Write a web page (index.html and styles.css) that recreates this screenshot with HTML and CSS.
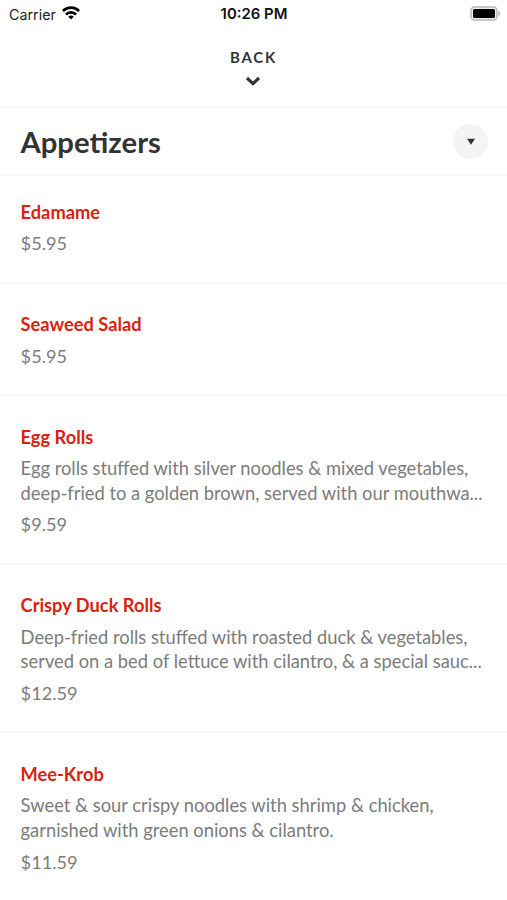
FILE: index.html
```html
<!DOCTYPE html>
<html lang="en">
<head>
<meta charset="utf-8">
<title>Appetizers</title>
<link rel="stylesheet" href="styles.css">
</head>
<body>
<div class="status">
  <div class="carrier"><span>Carrier</span>
    <svg class="wifi" width="18" height="14" viewBox="0 0 18 14"><g fill="none" stroke="#000" stroke-width="2.7"><path d="M.9 5a11.5 11.5 0 0 1 16.2 0"/><path d="M3.9 8.5a7.2 7.2 0 0 1 10.2 0"/></g><path d="M9 13.4L6.2 10.7a3.9 3.9 0 0 1 5.6 0z"/></svg>
  </div>
  <time>10:26 PM</time>
  <svg class="battery" width="31" height="15" viewBox="0 0 31 15"><rect x="1" y="1" width="26" height="13" rx="3.6" fill="#eee" stroke="#b8b8b8" stroke-width="1.5"/><rect x="3" y="3" width="22" height="9" rx="1.5"/><path d="M28.3 5c2.8 1 2.8 4 0 5z" fill="#b8b8b8"/></svg>
</div>
<button class="back"><span>BACK</span>
  <svg width="16" height="10" viewBox="0 0 16 10"><path d="M2 2l6 5.6L14 2" fill="none" stroke="#333" stroke-width="3.1"/></svg>
</button>
<header class="heading"><h1>Appetizers</h1>
  <button class="toggle"><svg width="10" height="8" viewBox="0 0 10 8"><path d="M1 .8h8L5 6.8z" fill="#333"/></svg></button>
</header>
<main>
  <article class="item"><h2>Edamame</h2><p class="price">$5.95</p></article>
  <article class="item"><h2>Seaweed Salad</h2><p class="price">$5.95</p></article>
  <article class="item"><h2>Egg Rolls</h2><p class="desc">Egg rolls stuffed with silver noodles &amp; mixed vegetables,<br>deep-fried to a golden brown, served with our mouthwa...</p><p class="price">$9.59</p></article>
  <article class="item"><h2>Crispy Duck Rolls</h2><p class="desc">Deep-fried rolls stuffed with roasted duck &amp; vegetables,<br>served on a bed of lettuce with cilantro, &amp; a special sauc...</p><p class="price">$12.59</p></article>
  <article class="item"><h2>Mee-Krob</h2><p class="desc">Sweet &amp; sour crispy noodles with shrimp &amp; chicken,<br>garnished with green onions &amp; cilantro.</p><p class="price">$11.59</p></article>
</main>
</body>
</html>
```
FILE: styles.css
```css
* { box-sizing: border-box; margin: 0; padding: 0; }
body { background: #fff; font-family: Lato, sans-serif; color: #333; height: 900px; overflow: hidden; }
button { border: 0; background: none; font: inherit; color: inherit; }
svg { display: block; }
.status { height: 27px; display: grid; grid-template-columns: 1fr auto 1fr; align-items: center; padding: 0 6px 0 9px; font: 14.3px/27px Inter, sans-serif; color: #222; }
.carrier { display: flex; align-items: center; gap: 6px; }
.wifi { margin-top: -2px; }
.status time { font-weight: 600; font-size: 14.9px; line-height: 28px; margin-right: 2px; color: #111; }
.battery { justify-self: end; margin-top: -1px; }
.back { width: 100%; height: 81px; border-bottom: 2px solid #f7f7f7; display: flex; flex-direction: column; align-items: center; padding-top: 20px; font-size: 15px; line-height: 20px; font-weight: 700; letter-spacing: 1.75px; }
.back svg { margin: 9px 1px 0 0; }
.heading { height: 68px; border-bottom: 2px solid #f7f7f7; display: flex; align-items: center; justify-content: space-between; padding: 1px 19px 0 20.4px; }
.heading h1 { font-size: 29.3px; line-height: 36px; font-weight: 700; }
.toggle { width: 35px; height: 35px; border-radius: 50%; background: #f4f4f4; display: grid; place-items: center; }
.item { padding: 28.7px 20px 25.5px 20.6px; border-bottom: 2px solid #f7f7f7; white-space: nowrap; color: #7c7c7c; font-size: 18.33px; line-height: 24.6px; }
.item:first-child { padding-top: 23.9px; }
.item:last-child { border-bottom: 0; }
.item h2 { font-size: 18.25px; line-height: 24.6px; font-weight: 700; color: #d9230f; margin-bottom: 7px; }
.desc { margin-bottom: 7px; }
.price { font-size: 18.2px; }
```
